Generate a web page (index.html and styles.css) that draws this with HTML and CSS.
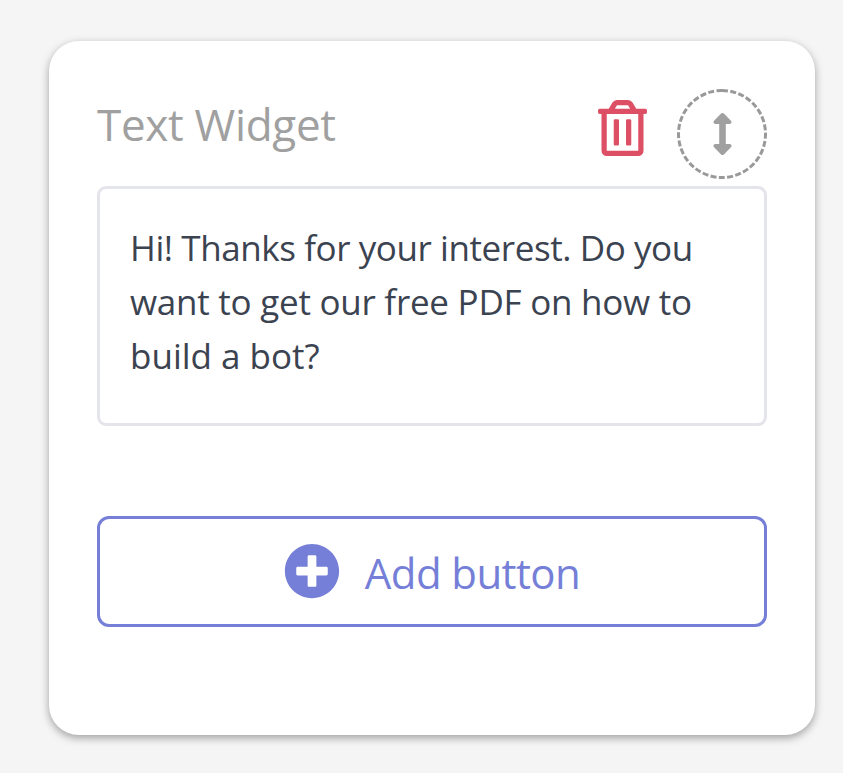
FILE: index.html
```html
<!DOCTYPE html>
<html lang="en">
<head>
  <meta charset="UTF-8">
  <title>Text Widget</title>
  <link rel="stylesheet" href="styles.css">
</head>
<body>

  <div class="card">
    <div class="card-header">
      <h2 class="card-title">Text Widget</h2>
      <svg class="icon-trash" viewBox="0 0 448 512">
        <path d="M268 416h24a12 12 0 0 0 12-12V188a12 12 0 0 0-12-12h-24a12 12 0 0 0-12 12v216a12 12 0 0 0 12 12zM432 80h-82.41l-34-56.7A48 48 0 0 0 274.41 0H173.59a48 48 0 0 0-41.16 23.3L98.41 80H16A16 16 0 0 0 0 96v16a16 16 0 0 0 16 16h16v336a48 48 0 0 0 48 48h288a48 48 0 0 0 48-48V128h16a16 16 0 0 0 16-16V96a16 16 0 0 0-16-16zM171.84 50.91A6 6 0 0 1 177 48h94a6 6 0 0 1 5.15 2.91L293.61 80H154.39zM368 464H80V128h288zm-212-48h24a12 12 0 0 0 12-12V188a12 12 0 0 0-12-12h-24a12 12 0 0 0-12 12v216a12 12 0 0 0 12 12z"/>
      </svg>
      <!-- Drag handle: dashed ring with arrow -->
      <svg class="drag-handle" viewBox="0 0 90 90">
        <path class="ring" d="M45 1.500a43.500 43.500 0 0 1 0 87a43.500 43.500 0 0 1 0-87"/>
        <svg class="icon-arrows" x="35" y="24" width="21" height="42" viewBox="0 0 256 512">
          <path d="M214.059 377.941H168V134.059h46.059c21.382 0 32.09-25.851 16.971-40.971L144.971 7.029c-9.373-9.373-24.568-9.373-33.941 0L24.971 93.088c-15.119 15.119-4.411 40.971 16.971 40.971H88v243.882H41.941c-21.382 0-32.09 25.851-16.971 40.971l86.059 86.059c9.373 9.373 24.568 9.373 33.941 0l86.059-86.059c15.12-15.119 4.412-40.971-16.97-40.971z"/>
        </svg>
      </svg>
    </div>

    <div class="message">
      <span class="line line-1">Hi! Thanks for your interest. Do you</span>
      <span class="line line-2">want to get our free PDF on how to</span>
      <span class="line line-3">build a bot?</span>
    </div>

    <button class="add-button">
      <svg class="icon-plus" viewBox="0 0 512 512">
        <path d="M256 8C119 8 8 119 8 256s111 248 248 248 248-111 248-248S393 8 256 8zm144 276c0 6.600-5.400 12-12 12h-92v92c0 6.600-5.400 12-12 12h-56c-6.600 0-12-5.400-12-12v-92h-92c-6.600 0-12-5.400-12-12v-56c0-6.600 5.400-12 12-12h92v-92c0-6.600 5.400-12 12-12h56c6.600 0 12 5.400 12 12v92h92c6.600 0 12 5.400 12 12v56z"/>
      </svg>
      <span class="add-label">Add button</span>
    </button>
  </div>

</body>
</html>
```
FILE: styles.css
```css
* {
  box-sizing: border-box;
}
body {
  margin: 0;
  padding: 41px 28px 38px 49px;
  background: #f5f5f5;
  font-family: "Open Sans", "Noto Sans", sans-serif;
}
.card {
  height: 694px;
  padding: 48px;
  background: white;
  border-radius: 30px;
  box-shadow: 0 3px 9px rgba(0, 0, 0, 0.35);
}
.card-header {
  display: flex;
  height: 90px;
}
.card-title {
  flex: 1;
  margin: 6px 0 0;
  font-size: 44px;
  font-weight: 400;
  line-height: 59px;
  letter-spacing: -0.3px;
  color: #a0a0a0;
  white-space: nowrap;
}
.icon-trash {
  width: 49px;
  height: 56px;
  margin: 11px 30px 0 0;
  fill: #dd4f64;
}
.drag-handle {
  width: 90px;
  height: 90px;
}
.ring {
  fill: none;
  stroke: #999;
  stroke-width: 3px;
  stroke-dasharray: 6px 2.354px;
}
.icon-arrows {
  fill: #a0a0a0;
}
.message {
  height: 240px;
  margin-top: 7px;
  padding: 32px 30px;
  border: 3px solid #e4e4eb;
  border-radius: 9px;
  font-size: 35px;
  line-height: 54px;
  color: #3b4351;
}
.line {
  display: block;
  white-space: nowrap;
}
.line-1 {
  letter-spacing: -0.42px;
}
.line-2 {
  letter-spacing: -0.25px;
}
.add-button {
  display: flex;
  align-items: center;
  justify-content: center;
  gap: 25px;
  width: 100%;
  height: 111px;
  margin-top: 90px;
  padding: 0;
  background: white;
  border: 3px solid #757fd8;
  border-radius: 12px;
  font-family: inherit;
  font-size: 42px;
  letter-spacing: -0.6px;
  color: #757fd8;
}
.icon-plus {
  width: 56px;
  height: 56px;
  margin-bottom: 2px;
  fill: #757fd8;
}
.add-label {
  padding-top: 2px;
}
```
